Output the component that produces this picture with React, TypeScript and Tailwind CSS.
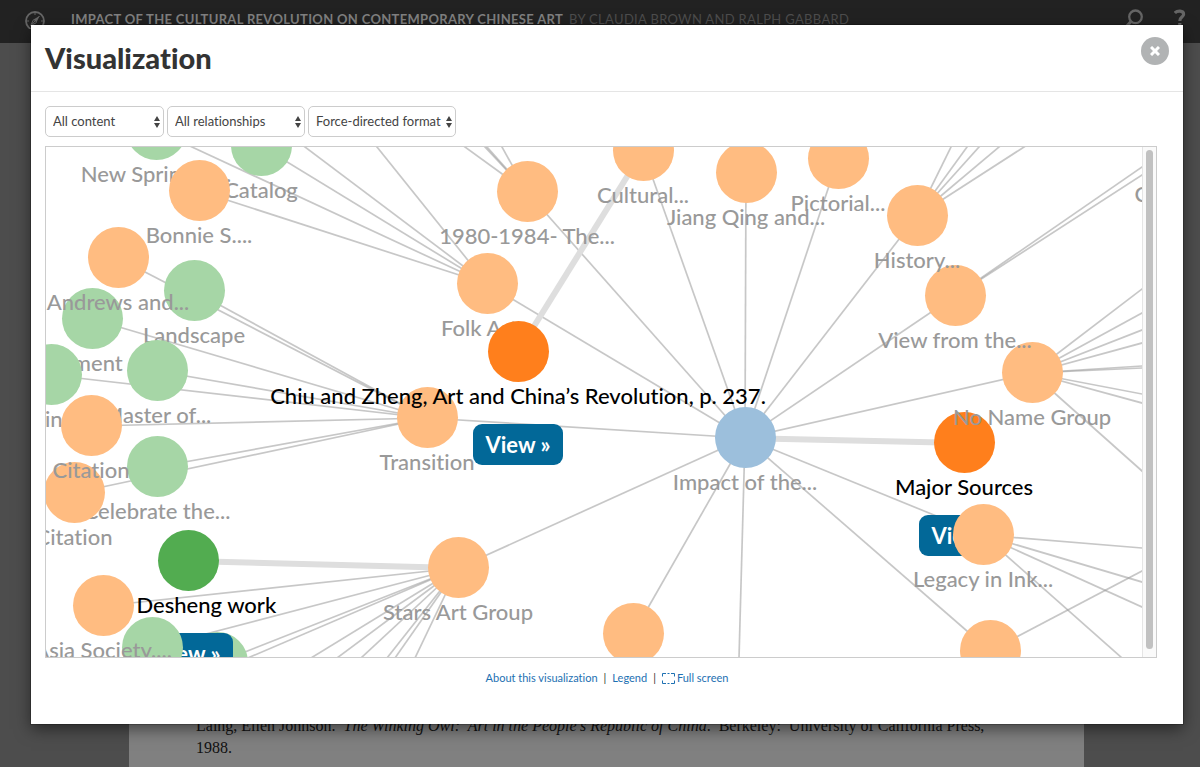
import React from "react";

type Tone = "orange" | "green" | "blue" | "orangeActive" | "greenActive";

interface GraphNode {
  x: number;
  y: number;
  tone: Tone;
  label?: string;
}

const toneClass: Record<Tone, string> = {
  orange: "bg-[#ffbc81]",
  green: "bg-[#a6d6a6]",
  blue: "bg-[#9cbfdc]",
  orangeActive: "bg-[#ff7f1c]",
  greenActive: "bg-[#52ac50]",
};

// Painted in order: later nodes lie over earlier ones.
const nodes: GraphNode[] = [
  { x: 110, y: -17, tone: "green", label: "New Spring in..." },
  { x: 215, y: -1, tone: "green", label: "Catalog" },
  { x: 153, y: 44, tone: "orange", label: "Bonnie S...." },
  { x: 148, y: 144, tone: "green", label: "Landscape" },
  { x: 46, y: 172, tone: "green", label: "ement" },
  { x: 72, y: 111, tone: "orange", label: "Andrews and..." },
  { x: 5, y: 228, tone: "green", label: "Trained" },
  { x: 111, y: 224, tone: "green", label: "Master of..." },
  { x: 111, y: 320, tone: "green", label: "Celebrate the..." },
  { x: 28, y: 346, tone: "orange", label: "Citation" },
  { x: 45, y: 279, tone: "orange", label: "Citation" },
  { x: 171, y: 516, tone: "green" },
  { x: 142, y: 414, tone: "greenActive", label: "Ma Desheng work" },
  { x: 106, y: 501, tone: "green" },
  { x: 57, y: 459, tone: "orange", label: "Asia Society...." },
  { x: 412, y: 421, tone: "orange", label: "Stars Art Group" },
  { x: 587, y: 487, tone: "orange" },
  { x: 481, y: 45, tone: "orange", label: "1980-1984- The..." },
  { x: 441, y: 137, tone: "orange", label: "Folk Art..." },
  { x: 381, y: 271, tone: "orange", label: "Transition" },
  { x: 699, y: 291, tone: "blue", label: "Impact of the..." },
  { x: 472, y: 205, tone: "orangeActive", label: "Chiu and Zheng, Art and China’s Revolution, p. 237." },
  { x: 597, y: 4, tone: "orange", label: "Cultural..." },
  { x: 700, y: 26, tone: "orange", label: "Jiang Qing and..." },
  { x: 792, y: 12, tone: "orange", label: "Pictorial..." },
  { x: 918, y: 296, tone: "orangeActive", label: "Major Sources" },
  { x: 986, y: 226, tone: "orange", label: "No Name Group" },
  { x: 909, y: 149, tone: "orange", label: "View from the..." },
  { x: 871, y: 69, tone: "orange", label: "History..." },
  { x: 937, y: 388, tone: "orange", label: "Legacy in Ink..." },
  { x: 944, y: 504, tone: "orange" },
  { x: 1127, y: 3, tone: "orange", label: "Citation" },
];

interface Fan {
  from: [number, number];
  to: [number, number][];
}

const links: Fan[] = [
  {
    from: [699, 291],
    to: [[481, 45], [441, 137], [381, 271], [412, 421], [587, 487], [597, 4], [700, 26], [792, 12], [871, 69], [909, 149], [986, 226], [937, 388], [944, 504]],
  },
  { from: [441, 137], to: [[153, 44], [215, -1]] },
  { from: [381, 271], to: [[72, 111], [148, 144], [46, 172], [111, 224], [5, 228], [45, 279], [111, 320], [28, 346]] },
  { from: [412, 421], to: [[57, 459], [106, 501], [171, 516], [176, 522]] },
];

// Links to nodes outside the viewport, each given by a point that it passes through.
const rays: Fan[] = [
  { from: [699, 291], to: [[693, 511]] },
  { from: [441, 137], to: [[146, 0], [259, 0], [331, 0]] },
  { from: [481, 45], to: [[419, 0], [439, 0], [441, 0], [456, 0]] },
  { from: [412, 421], to: [[265, 511], [291, 511], [315, 511], [341, 511], [349, 511], [369, 511]] },
  { from: [871, 69], to: [[905, 0], [921, 0], [933, 0], [953, 0], [978, 0]] },
  { from: [909, 149], to: [[1096, 20], [1096, 28]] },
  { from: [986, 226], to: [[1096, 142], [1096, 166], [1096, 183], [1096, 196], [1096, 219], [1096, 221], [1096, 247], [1096, 256], [1096, 324]] },
  { from: [937, 388], to: [[1096, 401], [1096, 435], [1096, 460], [1076, 511]] },
  { from: [944, 504], to: [[1096, 424]] },
];

const activeLinks: [number, number, number, number][] = [
  [472, 205, 597, 4],
  [699, 291, 918, 296],
  [142, 414, 412, 421],
];

function Links() {
  return (
    <svg className="absolute inset-0 h-full w-full" aria-hidden="true">
      <g stroke="#999" strokeOpacity="0.55" strokeWidth="1.7">
        {links.map(({ from, to }) =>
          to.map(([x, y]) => <line key={`${from}-${x}-${y}`} x1={from[0]} y1={from[1]} x2={x} y2={y} />)
        )}
        {rays.map(({ from, to }) =>
          to.map(([x, y]) => (
            <line key={`${from}-${x}-${y}`} x1={from[0]} y1={from[1]} x2={from[0] + (x - from[0]) * 4} y2={from[1] + (y - from[1]) * 4} />
          ))
        )}
      </g>
      <g stroke="#dedede" strokeWidth="6">
        {activeLinks.map(([x1, y1, x2, y2]) => (
          <line key={`${x1}-${y1}`} x1={x1} y1={y1} x2={x2} y2={y2} />
        ))}
      </g>
    </svg>
  );
}

function NodeView({ node }: { node: GraphNode }) {
  const active = node.tone === "orangeActive" || node.tone === "greenActive";
  return (
    <div className="absolute flex w-0 flex-col items-center" style={{ left: node.x, top: node.y - 31 }}>
      <div className={`size-[61px] shrink-0 rounded-full ${toneClass[node.tone]}`} />
      {node.label && (
        <div className={`text-[22px] leading-7 font-medium whitespace-pre ${active ? "text-black" : "text-[#999]"}`}>{node.label}</div>
      )}
      {active && (
        <button type="button" className="mt-[14px] h-[41px] w-[90px] shrink-0 rounded-[9px] bg-[#026898] text-[22px] leading-none font-bold text-white">
          View »
        </button>
      )}
    </div>
  );
}

function Picker({ label, value, width }: { label: string; value: string; width: string }) {
  return (
    <div className={`relative ${width}`}>
      <select
        aria-label={label}
        className="h-[31px] w-full appearance-none rounded-[5px] border border-[#ccc] bg-white pl-[7px] text-[13px] text-[#444]"
      >
        <option>{value}</option>
      </select>
      <svg className="pointer-events-none absolute top-[10px] right-[3px] h-3 w-2" viewBox="0 0 8 12" fill="#444" aria-hidden="true">
        <path d="M4 0 7 5H1ZM4 12 1 7H7Z" />
      </svg>
    </div>
  );
}

function TopBar() {
  return (
    <header className="flex h-[43px] items-start justify-between bg-[#222] pt-[7px] pr-[14px] pl-[25px]">
      <div className="flex items-center gap-[26px]">
        <svg className="size-5" viewBox="0 0 20 20" fill="none" stroke="#666" aria-hidden="true">
          <circle cx="10" cy="12" r="9" strokeWidth="1.8" />
          <path d="M14.5 7 11.5 13.5 8.5 10.6Z" fill="#666" stroke="none" />
          <path d="M14.5 7 5.5 17 11.5 13.5M8.5 10.6 5.5 17" strokeWidth="1" />
          <path d="M10 4v2M10 18v2M2 12h2M16 12h2" strokeWidth="1" />
        </svg>
        <div className="text-[13px] leading-6 tracking-wide whitespace-pre uppercase">
          <span className="font-bold text-[#808080]">Impact of the Cultural Revolution on Contemporary Chinese Art</span>
          <span className="ml-[6px] text-[#4d4d4d]">by Claudia Brown and Ralph Gabbard</span>
        </div>
      </div>
      <div className="flex items-start gap-[31px]">
        <svg className="h-5 w-[19px]" viewBox="0 0 19 20" fill="none" stroke="#666" aria-hidden="true">
          <circle cx="11.5" cy="9.8" r="6.3" strokeWidth="2.3" />
          <path d="M7 14.5 2 20" strokeWidth="3.2" />
        </svg>
        <svg className="h-5 w-3" viewBox="0 0 12 20" fill="none" stroke="#666" strokeWidth="3.2" aria-hidden="true">
          <path d="M.8 6C3 3.6 9.6 3 9.6 7.3 9.6 10.3 5.8 10 5.8 14" />
          <path d="M5.8 16v3" />
        </svg>
      </div>
    </header>
  );
}

export default function App() {
  return (
    <div className="relative flex h-screen min-h-[740px] flex-col overflow-hidden bg-[#4d4d4d] font-['Lato',sans-serif] [font-variant-ligatures:none]">
      <TopBar />
      <main className="mr-[116px] ml-[129px] flex flex-1 flex-col bg-[#808080] px-[67px] pt-[672px]">
        <p className="w-[800px] shrink-0 font-['Liberation_Serif',serif] text-base leading-[22px] text-[#111]">
          Laing, Ellen Johnson.&nbsp; <i>The Winking Owl:&nbsp; Art in the People's Republic of China</i>.&nbsp; Berkeley:&nbsp; University of California Press,
          1988.
        </p>
      </main>

      <div className="absolute inset-0 flex items-start pt-[25px] pr-[17px] pl-[31px]">
        <section
          role="dialog"
          aria-labelledby="dialog-title"
          className="flex min-w-0 flex-1 flex-col bg-white pb-[37px] shadow-[0_5px_15px_rgba(0,0,0,0.5),0_0_0_1px_rgba(0,0,0,0.2)]"
        >
          <div className="flex h-[67px] items-start justify-between border-b border-[#e5e5e5] pt-3 pr-[14px] pl-[14px]">
            <h1 id="dialog-title" className="text-[29px] leading-[42px] font-black text-[#333]">
              Visualization
            </h1>
            <button type="button" aria-label="Close" className="flex size-7 items-center justify-center rounded-full bg-[#b1b3b4]">
              <svg className="size-[10px]" viewBox="0 0 10 10" stroke="#fff" strokeWidth="3" aria-hidden="true">
                <path d="M1 1 9 9M9 1 1 9" />
              </svg>
            </button>
          </div>

          <div className="flex flex-col gap-[9px] pt-[14px] pr-[26px] pl-[14px]">
            <div className="flex gap-[3px]">
              <Picker label="Content" value="All content" width="w-[119px]" />
              <Picker label="Relationships" value="All relationships" width="w-[138px]" />
              <Picker label="Format" value="Force-directed format" width="w-[148px]" />
            </div>

            <div className="flex h-[512px] border border-[#ccc]">
              <div className="relative min-w-0 flex-1 overflow-hidden">
                <Links />
                {nodes.map((node) => (
                  <NodeView key={`${node.x}-${node.y}`} node={node} />
                ))}
              </div>
              <div className="flex w-[14px] justify-center border-l border-[#e5e5e5] bg-[#fafafa] pt-[3px] pb-2">
                <div className="w-[7px] rounded-full bg-[#c1c1c1]" />
              </div>
            </div>
          </div>

          <nav className="flex items-center justify-center gap-[6px] pt-[11px] text-[11px] leading-[18px] text-[#1d70b2]">
            <a href="#about">About this visualization</a>
            <span className="text-[#333]">|</span>
            <a href="#legend">Legend</a>
            <span className="text-[#333]">|</span>
            <a href="#fullscreen" className="flex items-center gap-[2px]">
              <svg className="h-[11px] w-[13px]" viewBox="0 0 13 11" fill="none" stroke="currentColor" aria-hidden="true">
                <path d="M.5 3.5v-3h3.5M9 .5h3.5v3M12.5 7.5v3H9M4 10.5H.5v-3M5.5.5h2M5.5 10.5h2" />
              </svg>
              Full screen
            </a>
          </nav>
        </section>
      </div>
    </div>
  );
}
